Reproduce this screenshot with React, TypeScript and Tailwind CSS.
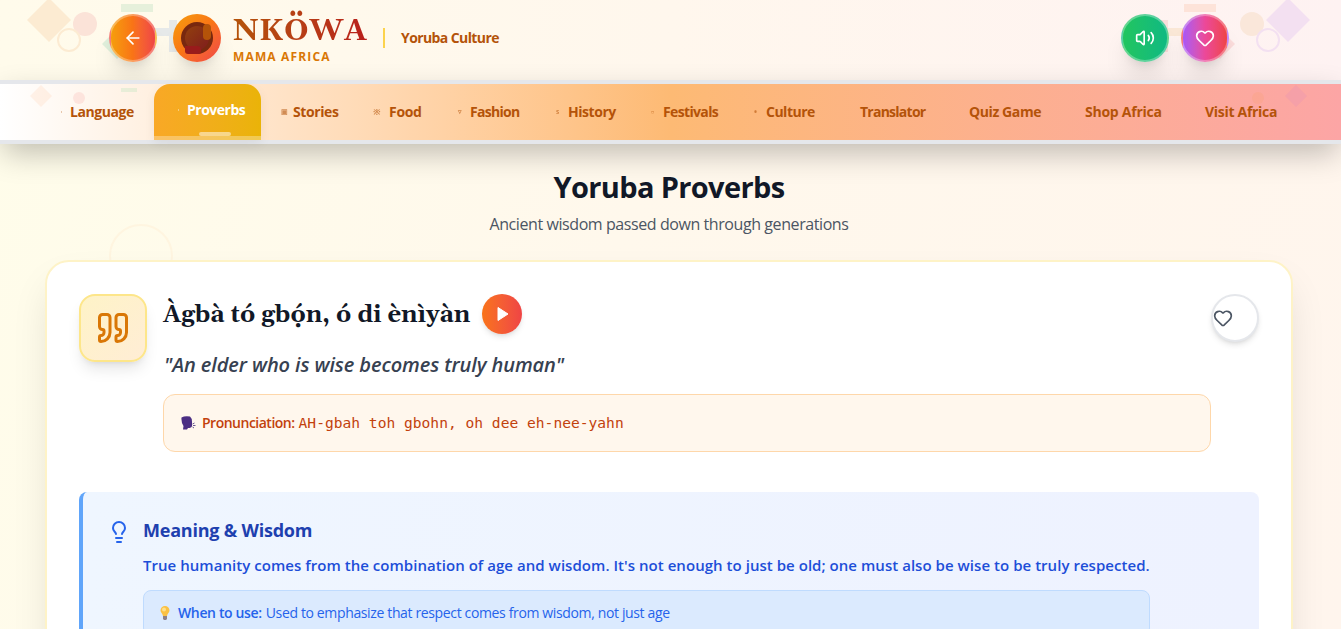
import { ArrowLeft, Heart, Lightbulb, Quote, Volume2 } from "lucide-react"

const links = [
  { label: "Stories", icon: "▣", style: "w-[96px] tracking-[-0.4px]", dot: "-left-3 text-[7px]" },
  { label: "Food", icon: "※", style: "w-[81px] tracking-[-0.3px]", dot: "-left-4 text-[9px]" },
  { label: "Fashion", icon: "▿", style: "w-[98px] tracking-[-0.7px]", dot: "-left-3 text-[7px]" },
  { label: "History", icon: "ꜱ", style: "w-[95px] tracking-[-0.45px]", dot: "-left-3 text-[7px]" },
  { label: "Festivals", icon: "▫", style: "w-[103px] tracking-[-0.65px]", dot: "-left-3 text-[9px]" },
  { label: "Culture", icon: "•", style: "w-[94px] tracking-[-0.5px]", dot: "-left-3 text-[8px]" },
  { label: "Translator", icon: "", style: "w-[109px] tracking-[-0.75px]", dot: "" },
  { label: "Quiz Game", icon: "", style: "w-[116px] tracking-[-0.4px]", dot: "" },
  { label: "Shop Africa", icon: "", style: "w-[120px] tracking-[-0.25px]", dot: "" },
  { label: "Visit Africa", icon: "", style: "w-[100px] tracking-[-0.3px]", dot: "" },
]

function PatternLeft() {
  return (
    <svg className="absolute left-0 top-0" width="260" height="80" viewBox="0 0 260 80">
      <path d="M49 -2L71 20L49 42L27 20Z" fill="#fcebd2" />
      <circle cx="85" cy="24" r="12" fill="#fbe3d8" />
      <circle cx="69" cy="40" r="11" fill="none" stroke="#fcebd2" strokeWidth="2" />
      <rect x="121" y="4" width="32" height="8" fill="#e6f0db" />
      <path d="M102 44L117 29L132 44L117 59Z" fill="#e0efdb" />
      <path d="M169 20h8v32h-8zM153 28h16v8h-16z" fill="#e6e9e9" />
    </svg>
  )
}

function PatternRight() {
  return (
    <svg className="absolute right-0 top-0" width="201" height="80" viewBox="0 0 201 80">
      <path d="M148 -2L170 20L148 42L126 20Z" fill="#f3e0f1" />
      <circle cx="112" cy="24" r="12" fill="#fae7da" />
      <circle cx="128" cy="40" r="11" fill="none" stroke="#f3e0f1" strokeWidth="2" />
      <rect x="44" y="4" width="32" height="8" fill="#fde3d9" />
      <path d="M65 44L80 29L95 44L80 59Z" fill="#fbdcdb" />
      <path d="M20 20h8v32h-8z" fill="#fbdedb" />
      <path d="M28 28h16v8h-16z" fill="#fae7d6" />
    </svg>
  )
}

function NavPattern() {
  return (
    <>
      <svg className="absolute left-0 top-0" width="150" height="56" viewBox="0 0 150 56">
        <path d="M41 1L52 12L41 23L30 12Z" fill="#f97316" fillOpacity="0.08" />
        <circle cx="79" cy="14" r="6" fill="#ef4444" fillOpacity="0.1" />
        <rect x="121" y="4" width="16" height="4" fill="#22c55e" fillOpacity="0.1" />
      </svg>
      <svg className="absolute right-0 top-0" width="120" height="56" viewBox="0 0 120 56">
        <path d="M75 1L86 12L75 23L64 12Z" fill="#a855f7" fillOpacity="0.08" />
        <circle cx="37" cy="14" r="6" fill="#f59e0b" fillOpacity="0.08" />
      </svg>
    </>
  )
}

function Logo() {
  return (
    <div className="ml-4 h-12 w-12 rounded-full bg-linear-to-br from-[#f59e0b] via-[#f97316] to-[#ef4444] shadow-xl">
      <svg width="48" height="48" viewBox="0 0 48 48">
        <defs>
          <linearGradient id="face" x1="0" y1="0" x2="1" y2="1">
            <stop offset="0" stopColor="#92400e" />
            <stop offset="1" stopColor="#7f1d1d" />
          </linearGradient>
        </defs>
        <circle cx="24" cy="24" r="16" fill="#78280f" />
        <circle cx="24" cy="24" r="12" fill="url(#face)" />
        <rect x="30" y="10" width="8" height="16" rx="4" fill="#b45309" />
        <path d="M12 32h12a4 4 0 0 1 4 4v1a3 3 0 0 1-3 3h-10a3 3 0 0 1-3-3z" fill="#991b1b" />
      </svg>
    </div>
  )
}

function Header() {
  return (
    <header className="relative h-20 bg-linear-to-r from-[#fffbeb] via-[#fff7ed] to-[#fef2f2]">
      <PatternLeft />
      <PatternRight />
      <div className="relative flex items-start pl-[109px] pr-[112px] pt-3.5">
        <button className="flex h-12 w-12 items-center justify-center rounded-full border-2 border-white/30 bg-linear-to-r from-[#f59e0b] via-[#f97316] to-[#ef4444] text-white shadow-xl">
          <ArrowLeft size={20} />
        </button>
        <Logo />
        <div className="-mt-1 ml-3 w-[138px]">
          <h1 className="bg-linear-to-r from-[#b45309] to-[#b91c1c] bg-clip-text font-['Gelasio','Liberation_Serif',serif] text-[30px] leading-[42px] font-bold tracking-[0.7px] whitespace-nowrap text-transparent">NKÖWA</h1>
          <p className="-mt-[3px] text-[12px] leading-4 font-bold tracking-[1.15px] text-[#d97706]">MAMA AFRICA</p>
        </div>
        <div className="mt-3.5 ml-3 h-5 w-0.5 bg-[#fcd34d]" />
        <p className="mt-3.5 ml-4 text-sm leading-5 font-bold tracking-[-0.6px] text-[#b45309]">Yoruba Culture</p>
        <button className="ml-auto flex h-12 w-12 items-center justify-center rounded-full border-2 border-white/30 bg-linear-to-r from-[#22c55e] to-[#10b981] text-white shadow-xl">
          <Volume2 size={20} />
        </button>
        <button className="ml-3 flex h-12 w-12 items-center justify-center rounded-full border-2 border-white/30 bg-linear-to-r from-[#a855f7] via-[#ec4899] to-[#ef4444] text-white shadow-xl">
          <Heart size={20} />
        </button>
      </div>
    </header>
  )
}

function Nav() {
  return (
    <nav className="relative flex h-16 border-y-4 border-[#e5e7eb] bg-linear-to-r from-white via-[#fdba74] to-[#fca5a5] text-sm font-bold whitespace-nowrap text-[#b45309] shadow-[0_12px_30px_-3px_rgba(0,0,0,0.25)]">
      <NavPattern />
      <a className="relative w-[154px] pt-[18px] pl-[70px] leading-5 tracking-[-0.45px]">
        <span className="absolute top-[27px] left-[61px] h-0.5 w-px bg-[#b45309]/30" />
        Language
      </a>
      <a className="relative mr-8 h-14 w-[107px] rounded-t-2xl bg-linear-to-r from-[#f9a826] to-[#eab308] pt-4 pl-[33px] leading-5 tracking-[-0.5px] text-white shadow-[0_4px_12px_rgba(0,0,0,0.06)]">
        <span className="absolute top-[25px] left-6 h-0.5 w-px bg-white/40" />
        Proverbs
        <span className="absolute bottom-0 left-0 h-1 w-full bg-white/30" />
        <span className="absolute bottom-1 left-[45px] h-1 w-8 rounded-full bg-white/50" />
      </a>
      {links.map((link) => (
        <a key={link.label} className={`relative shrink-0 pt-[18px] leading-5 ${link.style}`}>
          <span className={`absolute top-[18px] opacity-60 ${link.dot}`}>{link.icon}</span>
          {link.label}
        </a>
      ))}
    </nav>
  )
}

function Speaking() {
  return (
    <svg className="mr-1.5 inline-block" width="15" height="14" viewBox="0 0 15 14">
      <path d="M.5 1.500Q4 -.5 9 .5Q11 2 11 6V10Q10.500 12 7 12L6 13.500H2L2.500 10Q0 6 .5 1.500Z" fill="#4b2e83" />
      <path d="M11.500 8l2 -1M12 9.500h2.500M11.500 11l1.500 1" stroke="#6b5a94" />
    </svg>
  )
}

function Bulb() {
  return (
    <svg className="mr-2 inline-block" width="10" height="14" viewBox="0 0 10 14">
      <path d="M5 0A4.500 4.500 0 0 1 9.500 4.500C9.500 6.500 7.500 7.500 7 10H3C2.500 7.500 .5 6.500 .5 4.500A4.500 4.500 0 0 1 5 0Z" fill="#fbc143" />
      <circle cx="4" cy="3.500" r="2" fill="#ffe08a" />
      <path d="M3 10h4v3l-1 1H4l-1-1z" fill="#8d8189" />
    </svg>
  )
}

function ProverbCard() {
  return (
    <article className="relative mx-auto h-[600px] w-[1248px] rounded-3xl border-2 border-[#fef3c7] bg-white p-8 shadow-[0_20px_40px_-8px_rgba(0,0,0,0.13)]">
      <div className="flex items-start">
        <div className="flex h-[68px] w-[68px] items-center justify-center rounded-2xl border-2 border-[#fde68a] bg-linear-to-br from-[#fef3c7] to-[#ffedd5] text-[#d97706] shadow-lg">
          <Quote size={36} />
        </div>
        <div className="ml-4 w-[1048px]">
          <div className="flex h-10 items-center">
            <h3 className="w-[319px] pt-0.5 font-['Gelasio','Liberation_Serif',serif] text-2xl leading-8 font-bold tracking-[-0.07px] whitespace-nowrap text-[#111827]">Àgbà tó gbọ́n, ó di ènìyàn</h3>
            <button className="flex h-10 w-10 items-center justify-center rounded-full bg-linear-to-r from-[#f97316] to-[#ef4444] shadow-md">
              <svg width="16" height="16" viewBox="0 0 16 16"><path d="M4 1.500L14 8L4 14.500Z" fill="white" stroke="white" strokeLinejoin="round" /></svg>
            </button>
          </div>
          <p className="mt-[15px] mb-[13px] pl-px text-xl leading-8 font-semibold tracking-[-0.1px] text-[#374151] italic">"An elder who is wise becomes truly human"</p>
          <div className="flex h-[58px] items-center rounded-xl border border-[#fed7aa] bg-[#fff7ed] px-[17px] text-sm text-[#c2410c]">
            <Speaking />
            <span className="font-semibold tracking-[-0.5px]">Pronunciation:</span>
            <span className="ml-1 font-['DejaVu_Sans_Mono',monospace] text-[14.6px]">AH-gbah toh gbohn, oh dee eh-nee-yahn</span>
          </div>
        </div>
        <button className="flex h-12 w-12 items-center rounded-full border-2 border-[#e5e7eb] bg-white text-[#4b5563] shadow-md">
          <Heart size={20} />
        </button>
      </div>
      <section className="mt-10 flex h-60 rounded-lg border-l-4 border-[#60a5fa] bg-linear-to-r from-[#eff6ff] to-[#eef2ff] p-6">
        <Lightbulb size={24} className="mt-1 shrink-0 text-[#2563eb]" />
        <div className="ml-3 w-[1007px]">
          <h4 className="text-lg leading-7 font-bold tracking-[-0.22px] text-[#1e40af]">Meaning &amp; Wisdom</h4>
          <p className="mt-[9px] mb-[13px] text-[15px] leading-6 font-semibold tracking-[0.04px] whitespace-nowrap text-[#1d4ed8]">True humanity comes from the combination of age and wisdom. It's not enough to just be old; one must also be wise to be truly respected.</p>
          <div className="flex h-[46px] items-center rounded-lg border border-[#bfdbfe] bg-[#dbeafe] px-4 text-sm text-[#2563eb]">
            <Bulb />
            <span className="font-semibold tracking-[-0.36px]">When to use:</span>
            <span className="ml-1 tracking-[-0.36px]">Used to emphasize that respect comes from wisdom, not just age</span>
          </div>
        </div>
      </section>
    </article>
  )
}

export default function App() {
  return (
    <div className="h-[629px] overflow-hidden bg-[linear-gradient(110deg,#fffdea,#fff8ec_45%,#fff5ed)] font-['Open_Sans','Noto_Sans',sans-serif]">
      <Header />
      <Nav />
      <main className="pr-[3px]">
        <div className="relative">
          <div className="absolute top-[80px] left-[109px] h-16 w-16 rounded-full border-2 border-[#fff5e0]" />
          <h2 className="pt-[23px] pb-px text-center text-[29px] leading-10 font-bold tracking-[-0.65px] text-[#111827]">Yoruba Proverbs</h2>
          <p className="mt-0.5 mb-[22px] text-center text-base leading-7 tracking-[-0.42px] text-[#4b5563]">Ancient wisdom passed down through generations</p>
        </div>
        <ProverbCard />
      </main>
    </div>
  )
}
